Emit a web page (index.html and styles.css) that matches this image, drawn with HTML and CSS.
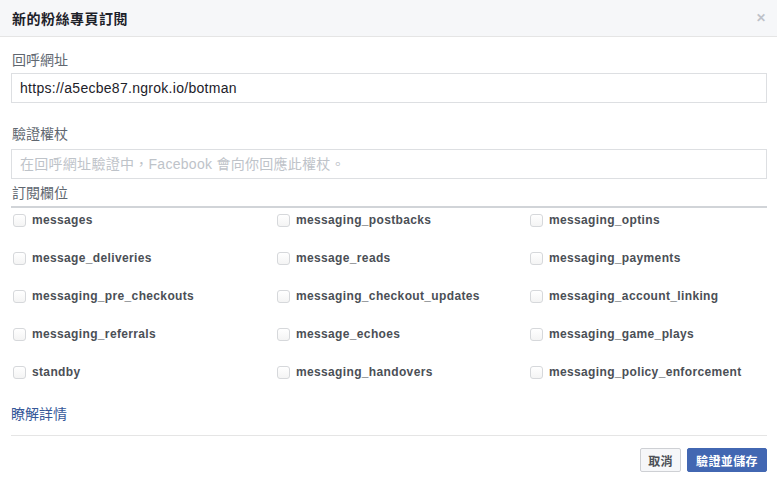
FILE: index.html
```html
<!DOCTYPE html>
<html lang="zh-Hant">
<head>
  <meta charset="UTF-8">
  <title>新的粉絲專頁訂閱</title>
  <link rel="stylesheet" href="styles.css">
</head>
<body>
  <div class="dialog">
    <div class="header">
      <span class="title">新的粉絲專頁訂閱</span>
      <span class="close">&#10005;</span>
    </div>

    <div class="content">
      <div class="label first">回呼網址</div>
      <input type="text" class="input-field" value="https://a5ecbe87.ngrok.io/botman">

      <div class="label">驗證權杖</div>
      <input type="text" class="input-field" placeholder="在回呼網址驗證中，Facebook 會向你回應此權杖。">

      <div class="section-title">訂閱欄位</div>
      <div class="fields">
        <label class="field"><span class="box"></span>messages</label>
        <label class="field"><span class="box"></span>messaging_postbacks</label>
        <label class="field"><span class="box"></span>messaging_optins</label>
        <label class="field"><span class="box"></span>message_deliveries</label>
        <label class="field"><span class="box"></span>message_reads</label>
        <label class="field"><span class="box"></span>messaging_payments</label>
        <label class="field"><span class="box"></span>messaging_pre_checkouts</label>
        <label class="field"><span class="box"></span>messaging_checkout_updates</label>
        <label class="field"><span class="box"></span>messaging_account_linking</label>
        <label class="field"><span class="box"></span>messaging_referrals</label>
        <label class="field"><span class="box"></span>message_echoes</label>
        <label class="field"><span class="box"></span>messaging_game_plays</label>
        <label class="field"><span class="box"></span>standby</label>
        <label class="field"><span class="box"></span>messaging_handovers</label>
        <label class="field"><span class="box"></span>messaging_policy_enforcement</label>
      </div>

      <a href="#" class="learn-more">瞭解詳情</a>
    </div>

    <div class="footer">
      <button class="btn">取消</button>
      <button class="btn btn-primary">驗證並儲存</button>
    </div>
  </div>
</body>
</html>
```

FILE: styles.css
```css
* {
  margin: 0;
  padding: 0;
  box-sizing: border-box;
}

body {
  font-family: "Liberation Sans", "Noto Sans CJK TC", Arial, sans-serif;
  background-color: #fff;
  color: #1d2129;
  width: 777px;
  height: 482px;
  overflow: hidden;
}

.header {
  height: 37px;
  background-color: #f6f7f9;
  border-bottom: 1px solid #e5e5e5;
  display: flex;
  align-items: center;
  justify-content: space-between;
  padding: 0 11px 0 12px;
}

.title {
  font-size: 14px;
  font-weight: bold;
  color: #1d2129;
  letter-spacing: 0.5px;
}

.close {
  font-size: 12px;
  color: #bec2c9;
  font-weight: bold;
}

.content {
  padding: 0 10px 0 11px;
}

.label {
  font-size: 14px;
  line-height: 18px;
  color: #606770;
  margin: 22px 0 6px 1px;
}

.label.first {
  margin-top: 14px;
  margin-bottom: 4px;
}

.input-field {
  display: block;
  width: 100%;
  height: 30px;
  border: 1px solid #dddfe2;
  font-family: inherit;
  font-size: 14px;
  letter-spacing: 0.28px;
  color: #1d2129;
  padding: 0 8px;
  outline: none;
}

.input-field::placeholder {
  color: #bec3c9;
}

.section-title {
  font-size: 14px;
  line-height: 18px;
  color: #606770;
  margin-top: 5px;
  padding: 0 0 4px 1px;
  border-bottom: 2px solid #d1d4d8;
}

.fields {
  display: grid;
  grid-template-columns: 264px 253px 1fr;
  row-gap: 18px;
  margin-top: 2px;
  padding-left: 2px;
}

.field {
  display: flex;
  align-items: center;
  height: 20px;
  font-size: 12px;
  font-weight: bold;
  letter-spacing: 0.35px;
  color: #4b4f56;
}

.box {
  width: 13px;
  height: 13px;
  border: 1px solid #d6d8db;
  border-radius: 3px;
  background: linear-gradient(#fff, #f4f4f4);
  margin-right: 6px;
}

.learn-more {
  display: block;
  margin-top: 23px;
  font-size: 14px;
  line-height: 18px;
  color: #365899;
  text-decoration: none;
  padding-bottom: 12px;
  border-bottom: 1px solid #e5e5e5;
}

.footer {
  display: flex;
  justify-content: flex-end;
  gap: 6px;
  padding: 12px 10px 0 0;
}

.btn {
  height: 24px;
  padding: 0 7px;
  font-family: inherit;
  font-size: 12px;
  font-weight: bold;
  letter-spacing: 0.4px;
  color: #4b4f56;
  background-color: #f6f7f9;
  border: 1px solid #ced0d4;
  border-radius: 2px;
}

.btn-primary {
  padding: 0 8px;
  background-color: #4267b2;
  border-color: #4267b2;
  color: #fff;
}
```
